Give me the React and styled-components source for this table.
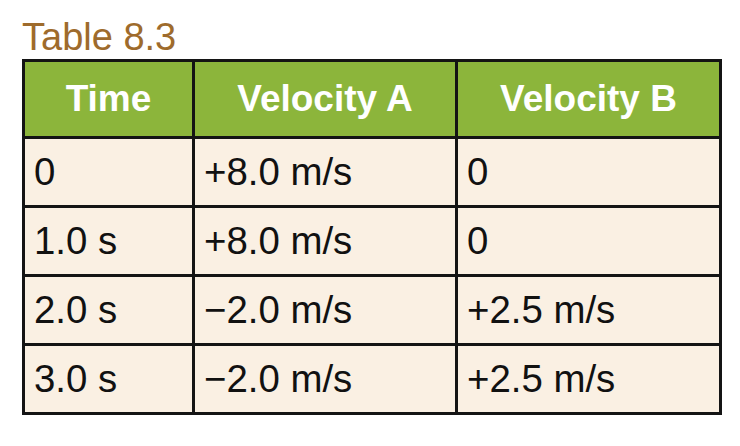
import React from "react";
import styled, { createGlobalStyle } from "styled-components";

const Global = createGlobalStyle`
  html, body { margin: 0; padding: 0; background: #ffffff; }
  body { font-family: "Liberation Sans", Arial, sans-serif; }
`;

const Page = styled.div`
  width: 740px;
  height: 446px;
  padding: 19px 0 0 22px;
  box-sizing: border-box;
`;

const Caption = styled.div`
  font-size: 38px;
  line-height: 37px;
  color: #9e6b2c;
  margin-bottom: 3px;
`;

const Grid = styled.div`
  display: grid;
  grid-template-columns: 167px 260px 261px;
  grid-template-rows: 74px repeat(4, 66px);
  gap: 3px;
  padding: 3px;
  background: #141414;
  width: max-content;
`;

const Head = styled.div`
  background: #8cb53b;
  color: #ffffff;
  font-weight: 700;
  font-size: 37px;
  display: flex;
  align-items: center;
  justify-content: center;
`;

const Cell = styled.div`
  background: #faf0e3;
  color: #111111;
  font-size: 38.4px;
  display: flex;
  align-items: center;
  padding-left: 9px;
`;

const rows = [
  ["0", "+8.0 m/s", "0"],
  ["1.0 s", "+8.0 m/s", "0"],
  ["2.0 s", "\u22122.0 m/s", "+2.5 m/s"],
  ["3.0 s", "\u22122.0 m/s", "+2.5 m/s"],
];

export default function App() {
  return (
    <Page>
      <Global />
      <Caption>Table 8.3</Caption>
      <Grid>
        <Head>Time</Head>
        <Head>Velocity A</Head>
        <Head>Velocity B</Head>
        {rows.map((r, i) =>
          r.map((c, j) => <Cell key={`${i}-${j}`}>{c}</Cell>)
        )}
      </Grid>
    </Page>
  );
}
